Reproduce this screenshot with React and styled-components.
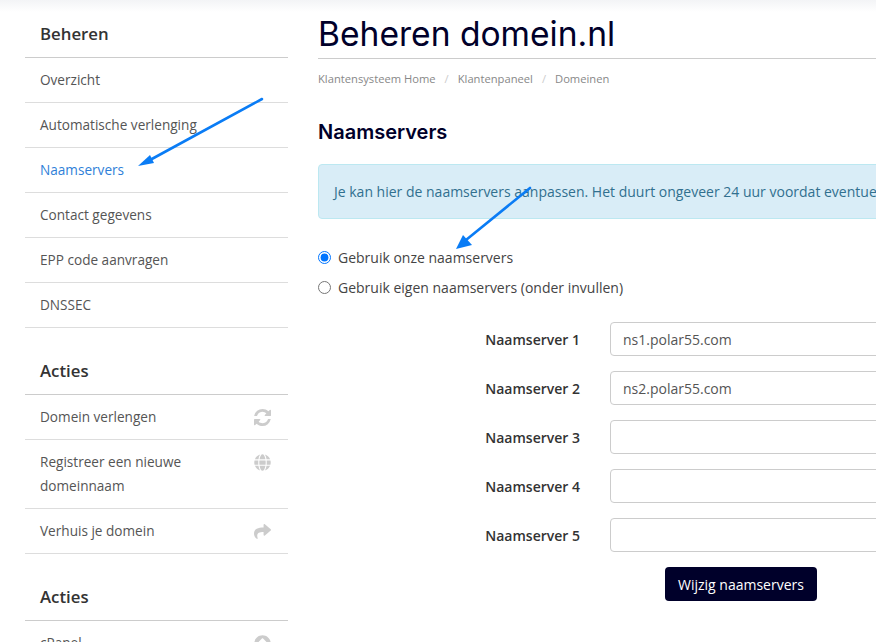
import React from "react";
import styled, { createGlobalStyle } from "styled-components";
import { FaGlobe, FaShare, FaArrowCircleUp } from "react-icons/fa";

const RefreshIcon = () => (
  <svg viewBox="128 128 1536 1536" width="17" height="17" fill="currentColor">
    <path d="M1639 1056q0 5-1 7-64 268-268 434.5t-478 166.5q-146 0-282.5-55t-243.5-157l-129 129q-19 19-45 19t-45-19-19-45v-448q0-26 19-45t45-19h448q26 0 45 19t19 45-19 45l-137 137q71 66 161 102t187 36q134 0 250-65t186-179q11-17 53-117 8-23 30-23h192q13 0 22.5 9.5t9.5 22.5zm25-800v448q0 26-19 45t-45 19h-448q-26 0-45-19t-19-45 19-45l138-138q-148-137-349-137-134 0-250 65t-186 179q-11 17-53 117-8 23-30 23h-199q-13 0-22.5-9.5t-9.5-22.5v-7q65-268 270-434.5t480-166.5q146 0 284 55.5t245 156.5l130-129q19-19 45-19t45 19 19 45z" />
  </svg>
);

const beheerLinks = [
  { label: "Overzicht" },
  { label: "Automatische verlenging" },
  { label: "Naamservers", active: true },
  { label: "Contact gegevens" },
  { label: "EPP code aanvragen" },
  { label: "DNSSEC" },
];

const actieLinks = [
  { label: "Domein verlengen", icon: <RefreshIcon /> },
  { label: "Registreer een nieuwe domeinnaam", icon: <FaGlobe /> },
  { label: "Verhuis je domein", icon: <FaShare /> },
];

const servers = ["ns1.polar55.com", "ns2.polar55.com", "", "", ""];

export default function App() {
  return (
    <Page>
      <GlobalStyle />
      <Sidebar>
        <SideHeading>Beheren</SideHeading>
        {beheerLinks.map((link) => (
          <SideLink key={link.label} $active={link.active}>
            <span>{link.label}</span>
          </SideLink>
        ))}
        <SideHeading $spaced>Acties</SideHeading>
        {actieLinks.map((link) => (
          <SideLink key={link.label}>
            <span>{link.label}</span>
            <SideIcon>{link.icon}</SideIcon>
          </SideLink>
        ))}
        <SideHeading $spaced>Acties</SideHeading>
        <SideLink>
          <span>cPanel</span>
          <SideIcon>
            <FaArrowCircleUp />
          </SideIcon>
        </SideLink>
      </Sidebar>

      <Main>
        <Title>Beheren domein.nl</Title>
        <Breadcrumb>
          <Crumb>Klantensysteem Home</Crumb>
          <Divider>/</Divider>
          <Crumb>Klantenpaneel</Crumb>
          <Divider>/</Divider>
          <Crumb>Domeinen</Crumb>
        </Breadcrumb>
        <SubTitle>Naamservers</SubTitle>
        <Alert>
          Je kan hier de naamservers aanpassen. Het duurt ongeveer 24 uur voordat eventuele wijzigingen zichtbaar zijn.
        </Alert>
        <RadioRow>
          <Radio type="radio" name="ns" defaultChecked />
          Gebruik onze naamservers
        </RadioRow>
        <RadioRow>
          <Radio type="radio" name="ns" />
          Gebruik eigen naamservers (onder invullen)
        </RadioRow>
        <ServerForm>
          {servers.map((value, index) => (
            <FormRow key={index}>
              <FormLabel>Naamserver {index + 1}</FormLabel>
              <TextInput defaultValue={value} />
            </FormRow>
          ))}
          <SubmitButton type="button">Wijzig naamservers</SubmitButton>
        </ServerForm>
      </Main>

      <Arrows viewBox="0 0 876 642" width="876" height="642">
        <line x1="262" y1="99" x2="150" y2="160" stroke="#0a7cf5" strokeWidth="2.6" strokeLinecap="round" />
        <polygon points="138,166 150,155 154,163" fill="#0a7cf5" />
        <line x1="530" y1="188" x2="466" y2="240" stroke="#0a7cf5" strokeWidth="2.6" strokeLinecap="round" />
        <polygon points="456,249 463,235 472,245" fill="#0a7cf5" />
      </Arrows>
    </Page>
  );
}

const GlobalStyle = createGlobalStyle`
  html, body {
    margin: 0;
    height: 100%;
    background: #fff;
    overflow: hidden;
  }
  * {
    box-sizing: border-box;
  }
`;

const Page = styled.div`
  position: relative;
  display: flex;
  width: 876px;
  height: 642px;
  overflow: hidden;
  padding-left: 25px;
  font-family: "Open Sans", sans-serif;
  color: #444;
  background: linear-gradient(#f3f4f6 0, #fff 12px);
`;

const Sidebar = styled.aside`
  flex: 0 0 263px;
  display: flex;
  flex-direction: column;
`;

const SideHeading = styled.div`
  flex: none;
  height: ${(p) => (p.$spaced ? "67px" : "58px")};
  padding: ${(p) => (p.$spaced ? "31px" : "22px")} 15px 0;
  border-bottom: 1px solid #ccc;
  font-size: 16.8px;
  line-height: 24px;
  font-weight: 600;
  color: #333;
`;

const SideLink = styled.div`
  display: flex;
  justify-content: space-between;
  flex: none;
  padding: 10px 17px 10px 15px;
  border-bottom: 1px solid #ddd;
  font-size: 13.6px;
  line-height: 24px;
  color: ${(p) => (p.$active ? "#2f7fd8" : "#555")};
  span:first-child {
    max-width: 200px;
  }
`;

const SideIcon = styled.span`
  display: flex;
  padding-top: 4px;
  font-size: 17px;
  color: #ccc;
`;

const Main = styled.main`
  flex: 0 0 700px;
  margin-left: 30px;
`;

const Title = styled.h1`
  height: 44px;
  margin: 15px 0 0;
  border-bottom: 1px solid #ccc;
  font-family: Inter, sans-serif;
  font-size: 33.6px;
  line-height: 38px;
  font-weight: 400;
  color: #00002a;
`;

const Breadcrumb = styled.div`
  display: flex;
  margin-top: 12px;
  font-size: 11.2px;
  line-height: 16px;
  color: #888;
`;

const Crumb = styled.span``;

const Divider = styled.span`
  padding: 0 9px;
  color: #ccc;
`;

const SubTitle = styled.h3`
  margin: 32px 0 0;
  font-family: Inter, sans-serif;
  font-size: 20px;
  line-height: 26px;
  font-weight: 600;
  color: #00002a;
`;

const Alert = styled.div`
  width: 700px;
  height: 55px;
  margin: 19px 0 23px;
  padding: 15px;
  border: 1px solid #bce8f1;
  border-radius: 4px;
  background: #d9edf7;
  color: #31708f;
  font-size: 14px;
  line-height: 24px;
  white-space: nowrap;
  overflow: hidden;
`;

const RadioRow = styled.label`
  display: flex;
  align-items: center;
  height: 30px;
  font-size: 14px;
  color: #444;
`;

const Radio = styled.input`
  width: 13px;
  height: 13px;
  margin: 0 7px 0 0;
`;

const ServerForm = styled.form`
  display: flex;
  flex-direction: column;
  margin-top: 20px;
`;

const FormRow = styled.div`
  display: flex;
  align-items: center;
  height: 34px;
  margin-bottom: 15px;
`;

const FormLabel = styled.label`
  width: 292px;
  padding: 1px 30px 0 0;
  text-align: right;
  font-size: 14px;
  font-weight: 600;
  color: #333;
`;

const TextInput = styled.input`
  width: 400px;
  height: 34px;
  padding: 0 12px;
  border: 1px solid #ccc;
  border-radius: 4px;
  font-family: "Open Sans", sans-serif;
  font-size: 14px;
  color: #555;
`;

const SubmitButton = styled.button`
  align-self: flex-start;
  width: 152px;
  height: 34px;
  margin-left: 347px;
  border: 0;
  border-radius: 4px;
  background: #00002a;
  color: #fff;
  font-family: "Open Sans", sans-serif;
  font-size: 14px;
`;

const Arrows = styled.svg`
  position: absolute;
  top: 0;
  left: 0;
  pointer-events: none;
`;
